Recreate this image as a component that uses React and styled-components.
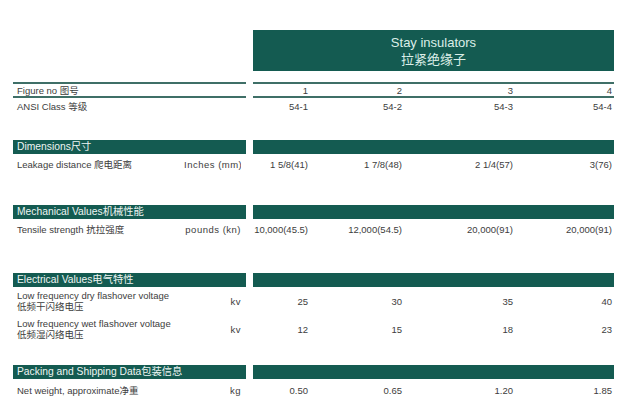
import React from "react";
import styled, { createGlobalStyle } from "styled-components";

const GREEN = "#145b51";
const RULE = "#3f6f67";

const GlobalStyle = createGlobalStyle`
  html, body {
    margin: 0;
    padding: 0;
    background: #ffffff;
  }
  body {
    font-family: "Liberation Sans", Arial, "Noto Sans CJK SC", sans-serif;
    color: #3d3d3d;
  }
`;

const Page = styled.div`
  width: 635px;
  height: 411px;
  padding: 30px 0 0 13px;
  box-sizing: border-box;
  overflow: hidden;
`;

const Row = styled.div`
  display: flex;
  gap: 7px;
  margin-top: ${(p) => p.$top || 0}px;
  height: ${(p) => p.$h}px;
`;

const Left = styled.div`
  width: 233px;
  display: flex;
  align-items: center;
  box-sizing: border-box;
  ${(p) => p.$ruled && `border-top: 2px solid ${RULE}; border-bottom: 2px solid ${RULE};`}
`;

const Right = styled.div`
  width: 361px;
  display: grid;
  grid-template-columns: 57px 94px 111px 99px;
  align-items: center;
  box-sizing: border-box;
  ${(p) => p.$ruled && `border-top: 2px solid ${RULE}; border-bottom: 2px solid ${RULE};`}
`;

const TitleBox = styled.div`
  width: 361px;
  background: ${GREEN};
  color: #dcefe9;
  font-size: 13px;
  line-height: 17px;
  display: flex;
  flex-direction: column;
  align-items: center;
  justify-content: center;
`;

const Bar = styled.div`
  width: ${(p) => p.$w}px;
  background: ${GREEN};
  color: #eef5f3;
  font-size: 10.3px;
  line-height: 14px;
  padding-left: 4px;
  box-sizing: border-box;
  white-space: nowrap;
`;

const Label = styled.div`
  width: 171px;
  padding-left: 4px;
  box-sizing: border-box;
  font-size: 9.5px;
  line-height: 11px;
  white-space: nowrap;
`;

/* long units start at the left edge and get clipped, as in the sheet */
const Unit = styled.div`
  width: 57px;
  text-align: right;
  font-size: 9.5px;
  letter-spacing: 0.5px;
  white-space: nowrap;
  overflow: hidden;
`;

const Cell = styled.div`
  text-align: right;
  padding-right: 2px;
  font-size: 9.5px;
  white-space: nowrap;
`;

const sections = [
  {
    title: "Dimensions尺寸",
    top: 26,
    rows: [
      {
        label: ["Leakage distance 爬电距离"],
        unit: "Inches (mm)",
        values: ["1 5/8(41)", "1 7/8(48)", "2 1/4(57)", "3(76)"],
        h: 20,
      },
    ],
  },
  {
    title: "Mechanical Values机械性能",
    top: 31,
    rows: [
      {
        label: ["Tensile strength  抗拉强度"],
        unit: "pounds (kn)",
        values: ["10,000(45.5)", "12,000(54.5)", "20,000(91)", "20,000(91)"],
        h: 20,
      },
    ],
  },
  {
    title: "Electrical Values电气特性",
    top: 34,
    rows: [
      {
        label: ["Low frequency dry flashover voltage", "低频干闪络电压"],
        unit: "kv",
        values: ["25", "30", "35", "40"],
        h: 28,
      },
      {
        label: ["Low frequency wet flashover voltage", "低频湿闪络电压"],
        unit: "kv",
        values: ["12", "15", "18", "23"],
        h: 28,
      },
    ],
  },
  {
    title: "Packing and Shipping Data包装信息",
    top: 22,
    rows: [
      {
        label: ["Net weight, approximate净重"],
        unit: "kg",
        values: ["0.50", "0.65", "1.20", "1.85"],
        h: 22,
      },
    ],
  },
];

function DataRow({ row }) {
  return (
    <Row $h={row.h}>
      <Left>
        <Label>
          {row.label.map((l) => (
            <div key={l}>{l}</div>
          ))}
        </Label>
        <Unit>{row.unit}</Unit>
      </Left>
      <Right>
        {row.values.map((v, i) => (
          <Cell key={i}>{v}</Cell>
        ))}
      </Right>
    </Row>
  );
}

export default function App() {
  return (
    <>
      <GlobalStyle />
      <Page>
        <Row $h={41}>
          <Left />
          <TitleBox>
            <div>Stay insulators</div>
            <div>拉紧绝缘子</div>
          </TitleBox>
        </Row>

        <Row $top={11} $h={16}>
          <Left $ruled>
            <Label>Figure no 图号</Label>
          </Left>
          <Right $ruled>
            {["1", "2", "3", "4"].map((v) => (
              <Cell key={v}>{v}</Cell>
            ))}
          </Right>
        </Row>
        <Row $h={16}>
          <Left>
            <Label>ANSI Class 等级</Label>
          </Left>
          <Right>
            {["54-1", "54-2", "54-3", "54-4"].map((v) => (
              <Cell key={v}>{v}</Cell>
            ))}
          </Right>
        </Row>

        {sections.map((s) => (
          <React.Fragment key={s.title}>
            <Row $top={s.top} $h={14}>
              <Bar $w={233}>{s.title}</Bar>
              <Bar $w={361} />
            </Row>
            {s.rows.map((r) => (
              <DataRow key={r.label[0]} row={r} />
            ))}
          </React.Fragment>
        ))}
      </Page>
    </>
  );
}
